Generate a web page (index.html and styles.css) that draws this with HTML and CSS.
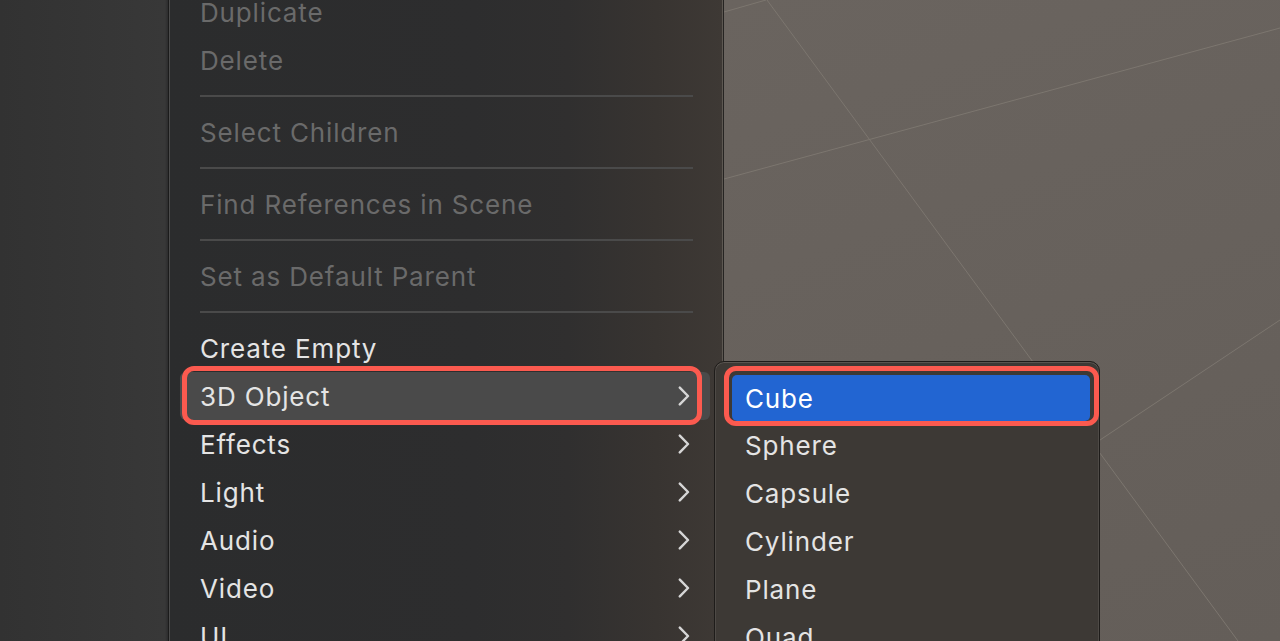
FILE: index.html
```html
<!DOCTYPE html>
<html>
<head>
<meta charset="utf-8">
<link rel="stylesheet" href="styles.css">
</head>
<body>
<div class="hierarchy"></div>
<div class="scene">
  <svg class="grid" width="556" height="641" viewBox="0 0 556 641">
    <line x1="43" y1="0" x2="514" y2="641"/>
    <line x1="0" y1="179" x2="556" y2="28"/>
    <line x1="0" y1="12" x2="42" y2="0"/>
    <line x1="376" y1="440" x2="556" y2="320"/>
  </svg>
</div>

<div class="menu">
  <div class="item disabled">Duplicate</div>
  <div class="item disabled">Delete</div>
  <div class="sep"><div class="line"></div></div>
  <div class="item disabled">Select Children</div>
  <div class="sep"><div class="line"></div></div>
  <div class="item disabled">Find References in Scene</div>
  <div class="sep"><div class="line"></div></div>
  <div class="item disabled">Set as Default Parent</div>
  <div class="sep"><div class="line"></div></div>
  <div class="item">Create Empty</div>
  <div class="item active">3D Object<svg class="chev" width="12" height="20" viewBox="0 0 12 20"><path d="M1.8 1.6 L10 10 L1.8 18.4"/></svg></div>
  <div class="item">Effects<svg class="chev" width="12" height="20" viewBox="0 0 12 20"><path d="M1.8 1.6 L10 10 L1.8 18.4"/></svg></div>
  <div class="item">Light<svg class="chev" width="12" height="20" viewBox="0 0 12 20"><path d="M1.8 1.6 L10 10 L1.8 18.4"/></svg></div>
  <div class="item">Audio<svg class="chev" width="12" height="20" viewBox="0 0 12 20"><path d="M1.8 1.6 L10 10 L1.8 18.4"/></svg></div>
  <div class="item">Video<svg class="chev" width="12" height="20" viewBox="0 0 12 20"><path d="M1.8 1.6 L10 10 L1.8 18.4"/></svg></div>
  <div class="item">UI<svg class="chev" width="12" height="20" viewBox="0 0 12 20"><path d="M1.8 1.6 L10 10 L1.8 18.4"/></svg></div>
</div>

<div class="submenu">
  <div class="sitem active">Cube</div>
  <div class="sitem">Sphere</div>
  <div class="sitem">Capsule</div>
  <div class="sitem">Cylinder</div>
  <div class="sitem">Plane</div>
  <div class="sitem">Quad</div>
</div>

<div class="mark mark-main"></div>
<div class="mark mark-sub"></div>
</body>
</html>
```

FILE: styles.css
```css
html, body {
  margin: 0;
  padding: 0;
}
body {
  width: 1280px;
  height: 641px;
  overflow: hidden;
  position: relative;
  display: flex;
  font-family: Inter, "Liberation Sans", sans-serif;
  -webkit-font-smoothing: antialiased;
}
.hierarchy {
  width: 724px;
  flex: none;
  background: linear-gradient(90deg, #323232 0px, #383838 165px, #2c2c2d 168px);
}
.scene {
  flex: 1;
  position: relative;
  background: linear-gradient(160deg, #6a645f 0%, #67615c 50%, #645e59 100%);
}
.grid {
  display: block;
}
.grid line {
  stroke: #7c766f;
  stroke-width: 1;
}

.menu {
  position: absolute;
  left: 168px;
  top: -12px;
  width: 556px;
  height: 720px;
  box-sizing: border-box;
  background: linear-gradient(90deg, #2b2c2d 0%, #2d2d2e 55%, #302f2f 72%, #383431 88%, #3e3935 100%);
  border-left: 1px solid #1b1b1b;
  border-right: 1px solid #262422;
  box-shadow: inset 1px 0 0 #4c4c4c, inset -1px 0 0 #5d5852;
}
.item {
  height: 48px;
  display: flex;
  align-items: center;
  padding: 0 33px 0 31px;
  font-size: 26px;
  color: #e4e4e4;
  letter-spacing: 0.85px;
}
.item.disabled {
  color: #6a6a6a;
}
.item.active {
  background: #4a4a4a;
  border-radius: 6px;
  margin: 0 13px 0 11px;
  padding: 0 20px 0 20px;
}
.chev {
  margin-left: auto;
  flex: none;
}
.chev path {
  fill: none;
  stroke: #d6d6d6;
  stroke-width: 2.4;
  stroke-linecap: round;
  stroke-linejoin: round;
}
.sep {
  height: 24px;
  display: flex;
  align-items: center;
  padding: 0 30px 0 31px;
}
.sep .line {
  flex: 1;
  height: 2px;
  background: #4a4a4a;
}

.submenu {
  position: absolute;
  left: 714px;
  top: 361px;
  width: 386px;
  height: 320px;
  box-sizing: border-box;
  padding-top: 11px;
  background: #3d3935;
  border: 1px solid #1e1c1a;
  border-radius: 10px;
  box-shadow: inset 0 1px 0 #5a5550, inset 1px 0 0 #4e4a46, inset -1px 0 0 #4e4a46;
}
.sitem {
  height: 48px;
  box-sizing: border-box;
  display: flex;
  align-items: center;
  padding-left: 30px;
  font-size: 26px;
  color: #e4e4e4;
  letter-spacing: 0.85px;
}
.sitem.active {
  background: #2265d2;
  color: #ffffff;
  border-radius: 5px;
  margin: 2px 9px 0 17px;
  height: 46px;
  padding-left: 13px;
}

.mark {
  position: absolute;
  border: 5px solid #fb5a4f;
  border-radius: 12px;
  box-sizing: border-box;
}
.mark-main {
  left: 182px;
  top: 366px;
  width: 520px;
  height: 59px;
}
.mark-sub {
  left: 724px;
  top: 366px;
  width: 375px;
  height: 60px;
}
```
